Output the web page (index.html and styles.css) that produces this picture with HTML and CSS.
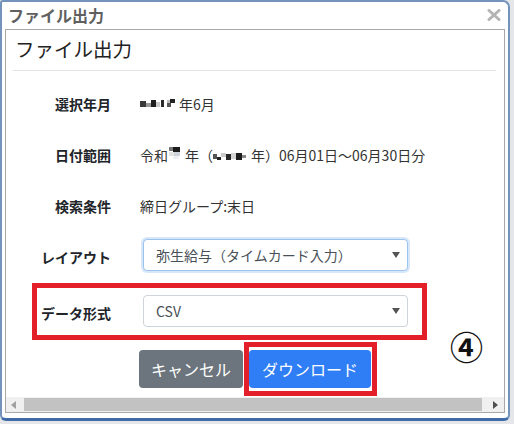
FILE: index.html
```html
<!DOCTYPE html>
<html lang="ja">
<head>
<meta charset="utf-8">
<title>ファイル出力</title>
<link rel="stylesheet" href="styles.css">
</head>
<body>
<div class="window">
  <div class="titlebar">
    <span class="title">ファイル出力</span>
    <svg class="close" width="14" height="12" viewBox="0 0 14 12"><path d="M2 1.5 L12 10.5 M12 1.5 L2 10.5" stroke="#b4b4b4" stroke-width="3" stroke-linecap="round"/></svg>
  </div>
  <div class="panel">
    <div class="content">
      <h1 class="heading">ファイル出力</h1>
      <div class="rule"></div>
      <div class="form">
        <div class="row row-1">
          <div class="label">選択年月</div>
          <div class="value"><svg class="mosaic" width="36" height="10" viewBox="0 0 36 10"><rect x="0" y="2" width="6" height="6" fill="#3a3a3a"/><rect x="6" y="4" width="5" height="4" fill="#9a9a9a"/><rect x="11" y="1" width="5" height="7" fill="#1e1e1e"/><rect x="16" y="3" width="4" height="5" fill="#c8c8c8"/><rect x="21" y="1" width="3" height="7" fill="#2a2a2a"/><rect x="27" y="4" width="4" height="4" fill="#555"/><rect x="30" y="0" width="5" height="4" fill="#222"/><rect x="27" y="1" width="3" height="3" fill="#bbb"/></svg> 年6月</div>
        </div>
        <div class="row row-2">
          <div class="label">日付範囲</div>
          <div class="value">令和<svg class="mosaic m2" width="14" height="12" viewBox="0 0 14 12"><rect x="0" y="0" width="4" height="4" fill="#777"/><rect x="4" y="0" width="7" height="5" fill="#1c1c1c"/><rect x="0" y="5" width="5" height="4" fill="#e2e2e2"/><rect x="5" y="5" width="6" height="4" fill="#cfd3da"/><rect x="4" y="9" width="6" height="3" fill="#eef0f3"/></svg>年（<svg class="mosaic m3" width="36" height="10" viewBox="0 0 36 10"><rect x="0" y="3" width="4" height="5" fill="#555"/><rect x="4" y="6" width="4" height="3" fill="#222"/><rect x="8" y="2" width="5" height="4" fill="#ccc"/><rect x="13" y="3" width="5" height="6" fill="#2a2a2a"/><rect x="18" y="2" width="5" height="6" fill="#d5d5d5"/><rect x="23" y="2" width="6" height="7" fill="#1e1e1e"/><rect x="29" y="4" width="4" height="3" fill="#888"/></svg>年）06月01日～06月30日分</div>
        </div>
        <div class="row row-3">
          <div class="label">検索条件</div>
          <div class="value">締日グループ:末日</div>
        </div>
        <div class="row row-4">
          <div class="label">レイアウト</div>
          <div class="select focused"><span>弥生給与（タイムカード入力）</span><svg class="caret" width="8" height="6" viewBox="0 0 8 6"><path d="M0 0 H8 L4 6 Z" fill="#555"/></svg></div>
        </div>
        <div class="row row-5">
          <div class="label">データ形式</div>
          <div class="select"><span>CSV</span><svg class="caret" width="8" height="6" viewBox="0 0 8 6"><path d="M0 0 H8 L4 6 Z" fill="#555"/></svg></div>
        </div>
        <div class="buttons">
          <button class="btn btn-cancel">キャンセル</button>
          <button class="btn btn-primary">ダウンロード</button>
        </div>
      </div>
    </div>
    <div class="hscroll">
      <svg class="arrow" width="5" height="8" viewBox="0 0 5 8"><path d="M5 0 V8 L0 4 Z" fill="#a0a0a0"/></svg>
      <div class="thumb"></div>
      <svg class="arrow" width="5" height="8" viewBox="0 0 5 8"><path d="M0 0 V8 L5 4 Z" fill="#505050"/></svg>
    </div>
  </div>
  <div class="mark mark-format"></div>
  <div class="mark mark-download"></div>
  <div class="step">④</div>
</div>
</body>
</html>
```

FILE: styles.css
```css
html, body {
  margin: 0;
  padding: 0;
}
body {
  width: 514px;
  height: 424px;
  background: #e4e6e9;
  font-family: "Noto Sans CJK JP", "Noto Sans", sans-serif;
  color: #212529;
  overflow: hidden;
}
.window {
  position: relative;
  box-sizing: border-box;
  width: 510px;
  height: 421px;
  background: #fff;
  border: 2px solid #7393bd;
  border-bottom: 3px solid #3f6ca8;
  border-radius: 3px 7px 6px 6px;
  display: flex;
  flex-direction: column;
}
.titlebar {
  height: 27px;
  flex: none;
  display: flex;
  align-items: center;
  justify-content: space-between;
  padding: 0 7px 0 6px;
}
.title {
  font-size: 16px;
  font-weight: bold;
  color: #5f5f5f;
  line-height: 20px;
  margin-top: -1px;
}
.close {
  display: block;
  margin-top: -2px;
}
.panel {
  flex: none;
  margin: 0 3px;
  height: 384px;
  box-sizing: border-box;
  border: 1px solid #a8a8a8;
  display: flex;
  flex-direction: column;
}
.content {
  flex: 1;
  overflow: hidden;
}
.heading {
  margin: 0;
  padding: 5px 0 0 9px;
  font-size: 19.5px;
  font-weight: normal;
  line-height: 28px;
  color: #222;
}
.rule {
  height: 1px;
  background: #e2e2e2;
  margin: 7px 8px 0 7px;
}
.form {
  padding-top: 8px;
}
.row {
  display: grid;
  grid-template-columns: 105px 1fr;
  column-gap: 30px;
  align-items: center;
}
.row-1 { height: 50px; }
.row-2 { height: 52px; }
.row-3 { height: 50px; }
.row-4 { margin-top: 8px; height: 32px; }
.row-5 { margin-top: 24px; height: 32px; }
.label {
  text-align: right;
  font-size: 14px;
  font-weight: bold;
  line-height: 20px;
  color: #212529;
}
.row-4 .label, .row-5 .label { padding-top: 3px; }
.value {
  font-size: 14px;
  line-height: 20px;
  color: #333;
  white-space: nowrap;
  margin-left: -1px;
  display: flex;
  align-items: center;
}
.mosaic {
  display: inline-block;
  margin-right: 3px;
}
.m2 { margin: 0 2px 4px 1px; }
.m3 { margin: 2px 2px 0 0; }
.select {
  box-sizing: border-box;
  width: 265px;
  height: 32px;
  margin-left: 2px;
  border: 1px solid #ced4da;
  border-radius: 4px;
  background: #fff;
  display: flex;
  align-items: center;
  justify-content: space-between;
  padding: 0 7px 0 12px;
  font-size: 14px;
  color: #495057;
}
.select.focused {
  border-color: #9cc2ee;
  box-shadow: 0 0 0 2px rgba(140, 185, 240, 0.35);
}
.caret { display: block; }
.buttons {
  margin-top: 23px;
  display: flex;
  justify-content: center;
  gap: 6px;
}
.btn {
  height: 38px;
  border: none;
  border-radius: 4px;
  padding: 0 12px;
  font-family: inherit;
  font-size: 16px;
  line-height: 20px;
  color: #fff;
}
.btn-cancel {
  background: #6c757d;
  width: 104px;
}
.btn-primary {
  background: #2f7ef5;
  width: 122px;
}
.hscroll {
  flex: none;
  height: 15px;
  background: #f0f0f0;
  display: flex;
  align-items: center;
  padding: 0 6px 0 5px;
  gap: 0;
}
.hscroll .arrow { flex: none; display: block; }
.thumb {
  flex: 1;
  height: 13px;
  margin: 0 11px 0 8px;
  background: #c2c2c2;
}
.mark {
  position: absolute;
  box-sizing: border-box;
  border: 5px solid #e3202a;
}
.mark-format {
  left: 30px;
  top: 281px;
  width: 395px;
  height: 57px;
}
.mark-download {
  left: 242px;
  top: 340px;
  width: 133px;
  height: 54px;
}
.step {
  position: absolute;
  left: 448px;
  top: 326px;
  font-size: 33px;
  font-weight: bold;
  line-height: 36px;
  color: #111;
}
```
